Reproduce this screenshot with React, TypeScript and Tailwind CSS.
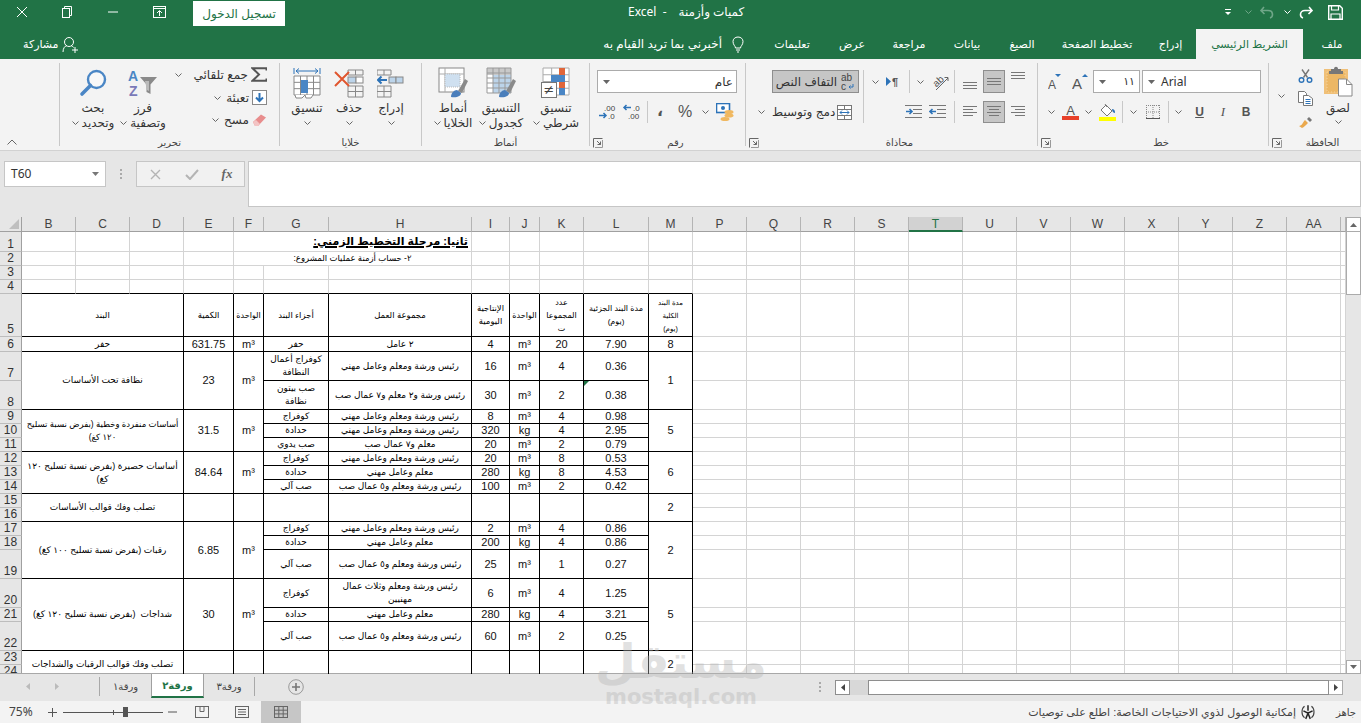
import React from "react";

const Chev = ({ c = "#666" }: { c?: string }) => (
  <svg width="7" height="4" viewBox="0 0 7 4" className="shrink-0"><path d="M.5.5 3.5 3.5 6.5.5" fill="none" stroke={c} /></svg>
);
const ChevBox = ({ w }: { w: string }) => <div className={w + " flex justify-center items-center"}><Chev /></div>;
const Div = ({ cls = "" }: { cls?: string }) => <div className={"w-px self-stretch bg-[#c8c8c8] " + cls} />;

const Launcher = () => (
  <svg width="10" height="10" viewBox="0 0 10 10"><path d="M.5 9.5V.5h9M4 3l3.5 3.5M7.5 3.5v3h-3" fill="none" stroke="#666" /><path d="M2 9.5h7.5V2" fill="none" stroke="#999" /></svg>
);

const Group = ({ w, label, launcher, children }: { w: string; label: string; launcher?: boolean; children: React.ReactNode }) => (
  <div className={w + " h-full flex flex-col shrink-0"}>
    <div className="flex-1 min-h-0">{children}</div>
    {launcher ? (
      <div className="h-[15px] grid grid-cols-[16px_1fr] items-center text-[10px] text-[#444]">
        <div className="pl-[3px] flex"><Launcher /></div>
        <div className="text-center leading-[15px]">{label}</div>
      </div>
    ) : (
      <div className="h-[15px] text-center text-[10px] leading-[15px] text-[#444]">{label}</div>
    )}
  </div>
);

const Big = ({ w, icon, l1, l2, chev = true }: { w: string; icon: React.ReactNode; l1: string; l2?: string; chev?: boolean }) => (
  <div className={w + " shrink-0 flex flex-col items-center text-[12px] text-[#333] leading-[14.5px]"}>
    <div className="h-[36px] mt-[6px] flex items-center justify-center">{icon}</div>
    <div className="whitespace-nowrap">{l1}</div>
    <div className="flex items-center gap-[3px] whitespace-nowrap h-[14.5px]">
      {chev && <Chev />}
      {l2 && <span>{l2}</span>}
    </div>
  </div>
);

const Lines = ({ y, xs, w = 15 }: { y: number[]; xs: [number, number][]; w?: number }) => (
  <svg width={w} height="14" viewBox={`0 0 ${w} 14`}>
    {y.map((v, i) => <path key={i} d={`M${xs[i][0]} ${v + 0.5}H${xs[i][1]}`} stroke="#777" />)}
  </svg>
);
const AL = { y: [1, 4, 7, 10], xs: [[0, 14], [0, 10], [0, 14], [0, 10]] as [number, number][] };
const AC = { y: [1, 4, 7, 10], xs: [[0, 14], [2, 12], [0, 14], [2, 12]] as [number, number][] };
const AR = { y: [1, 4, 7, 10], xs: [[0, 14], [4, 14], [0, 14], [4, 14]] as [number, number][] };
const XS3 = [[0, 14], [0, 14], [0, 14]] as [number, number][];

const Grid3 = ({ x, y, w, h, nx, ny, stroke = "#888" }: { x: number; y: number; w: number; h: number; nx: number; ny: number; stroke?: string }) => {
  const p: string[] = [];
  for (let i = 0; i <= nx; i++) p.push(`M${x + (i * w) / nx} ${y}V${y + h}`);
  for (let i = 0; i <= ny; i++) p.push(`M${x} ${y + (i * h) / ny}H${x + w}`);
  return <path d={p.join("")} stroke={stroke} fill="none" strokeWidth="1" />;
};

const Brush = () => (
  <g>
    <path d="M20 24 27 12l3 2-6 12z" fill="#8a8a8a" />
    <path d="M13 30c0-4 3-7 6-7l4 3c0 3-4 5-10 4z" fill="#4a7ebb" />
  </g>
);

const IconSearch = () => (
  <svg width="28" height="28" viewBox="0 0 28 28"><circle cx="17.5" cy="10.5" r="8.5" fill="#fff" fillOpacity=".4" stroke="#4a86c5" strokeWidth="2.4" /><path d="M11.5 16.5 3 25" stroke="#4a86c5" strokeWidth="3.6" strokeLinecap="round" /></svg>
);
const IconSort = () => (
  <svg width="30" height="28" viewBox="0 0 30 28"><text x="0" y="12" fontSize="14" fontWeight="700" fill="#4a86c5" fontFamily="Liberation Sans">A</text><text x="1" y="27" fontSize="14" fontWeight="700" fill="#7a7ab8" fontFamily="Liberation Sans">Z</text><path d="M12 8h17l-6.5 7.5V25l-4-2v-7.5z" fill="#8a8a8a" /><path d="M17 12h4v10l-2-1z" fill="#bbb" /></svg>
);
const IconSigma = () => (
  <svg width="16" height="15" viewBox="0 0 16 15"><path d="M15.5 3.5V1.2H1.5L8 7.5l-6.5 6.3h14v-2.3" fill="none" stroke="#555" strokeWidth="2" /></svg>
);
const IconFill = () => (
  <svg width="15" height="15" viewBox="0 0 15 15"><rect x=".5" y=".5" width="14" height="14" fill="#fff" stroke="#888" /><path d="M7.5 3v8M4 7.5l3.5 3.5L11 7.5" fill="none" stroke="#2d73b8" strokeWidth="2" /></svg>
);
const IconEraser = () => (
  <svg width="15" height="14" viewBox="0 0 15 14"><path d="M1 9 9 1.5l5 3L6 13H3z" fill="#e88d8d" /><path d="M1 9l2 4h3l2-2-4-4z" fill="#f3c4c4" /></svg>
);
const IconFormat = () => (
  <svg width="28" height="32" viewBox="0 0 28 32">
    <path d="M1 1v6M27 1v6M3 4h22M3 4l3-2.5M3 4l3 2.5M25 4l-3-2.5M25 4l-3 2.5" stroke="#2d73b8" fill="none" />
    <rect x="1" y="9" width="26" height="19" fill="#fff" />
    <Grid3 x={1} y={9} w={26} h={19} nx={4} ny={3} />
    <rect x="8" y="13" width="7" height="13" fill="#4a86c5" />
    <path d="M2 28l1 3h6l3-3M12 28l1 3h5l2-3" fill="#fff" stroke="#888" />
  </svg>
);
const IconDelete = () => (
  <svg width="30" height="29" viewBox="0 0 30 29">
    <Grid3 x={14} y={1} w={15} h={5} nx={2} ny={1} />
    <rect x="14" y="8" width="8" height="6" fill="#bcd4ea" stroke="#888" />
    <rect x="22" y="8" width="7" height="6" fill="#fff" stroke="#888" />
    <Grid3 x={14} y={17} w={15} h={11} nx={2} ny={2} />
    <path d="M1 3l14 14M15 3 1 17" stroke="#e0562f" strokeWidth="2" />
  </svg>
);
const IconInsert = () => (
  <svg width="28" height="29" viewBox="0 0 28 29">
    <Grid3 x={0} y={1} w={14} h={5} nx={2} ny={1} />
    <path d="M1 11h9M4.5 7.5 1 11l3.5 3.5" fill="none" stroke="#2d73b8" strokeWidth="2" />
    <rect x="12" y="8" width="7" height="6" fill="#bcd4ea" stroke="#888" />
    <rect x="19" y="8" width="7" height="6" fill="#bcd4ea" stroke="#888" />
    <Grid3 x={0} y={17} w={14} h={11} nx={2} ny={2} />
  </svg>
);
const IconCond = () => (
  <svg width="30" height="32" viewBox="0 0 30 32">
    <rect x="2" y="1" width="26" height="27" fill="#fff" />
    <Grid3 x={2} y={1} w={26} h={27} nx={3} ny={4} stroke="#aaa" />
    <rect x="18" y="1" width="6" height="7" fill="#e0663a" />
    <rect x="10" y="8" width="14" height="7" fill="#4a86c5" />
    <rect x="18" y="15" width="6" height="6" fill="#e0663a" />
    <rect x="18" y="21" width="6" height="7" fill="#4a86c5" />
    <rect x=".5" y="15.5" width="15" height="15" fill="#fff" stroke="#777" />
    <text x="8" y="27" textAnchor="middle" fontSize="13" fill="#444" fontFamily="DejaVu Sans">≠</text>
  </svg>
);
const IconTable = () => (
  <svg width="31" height="32" viewBox="0 0 31 32">
    <rect x="1" y="1" width="24" height="25" fill="#fff" />
    <rect x="1" y="1" width="24" height="7" fill="#c9c9c9" />
    <rect x="7" y="8" width="18" height="18" fill="#bcd4ea" />
    <Grid3 x={1} y={1} w={24} h={25} nx={4} ny={5} stroke="#999" />
    <Brush />
  </svg>
);
const IconStyles = () => (
  <svg width="31" height="32" viewBox="0 0 31 32">
    <rect x="1" y="1" width="25" height="24" fill="#fff" stroke="#888" />
    <path d="M1 7h25M7 1v24" stroke="#aaa" />
    <rect x="7" y="7" width="15" height="13" fill="#cfe0f0" stroke="#bbb" strokeDasharray="1 1" />
    <Brush />
  </svg>
);
const IconWrap = () => (
  <svg width="14" height="18" viewBox="0 0 14 18"><text x="0" y="8" fontSize="10" fill="#444" fontFamily="Liberation Sans">ab</text><text x="0" y="17" fontSize="10" fill="#444" fontFamily="Liberation Sans">c</text><path d="M12 11v3H8M9.500 12.500 8 14l1.500 1.500" fill="none" stroke="#2d73b8" /></svg>
);
const IconMerge = () => (
  <svg width="15" height="15" viewBox="0 0 15 15"><rect x=".5" y=".5" width="14" height="14" fill="#fff" stroke="#777" /><path d="M0 4.500h15M0 10.500h15M7.500 0v4M7.500 11v4" stroke="#777" /><path d="M3 7.500h9M5 5.500l-2 2 2 2M10 5.500l2 2-2 2" fill="none" stroke="#2d73b8" /></svg>
);
const IconOrient = () => (
  <svg width="17" height="18" viewBox="0 0 17 18">
    <text x="1" y="12" fontSize="10" fill="#555" fontFamily="Liberation Sans" transform="rotate(-42 6 9)">ab</text>
    <path d="M4 17 16 5M12.500 4.500H16v3.500" fill="none" stroke="#666" />
  </svg>
);
const IconPara = () => (
  <svg width="14" height="11" viewBox="0 0 14 11"><path d="M0 1l5 4.500L0 10z" fill="#2d73b8" /><text x="6" y="10" fontSize="11" fontWeight="700" fill="#555" fontFamily="Liberation Sans">¶</text></svg>
);
const IconIndent = ({ dec }: { dec?: boolean }) => (
  <svg width="17" height="14" viewBox="0 0 17 14">
    <path d="M0 .5h17M8 4.500h9M8 8.500h9M0 12.500h17" stroke="#777" />
    <path d={dec ? "M7 6.500H1M3.500 4 1 6.500 3.500 9" : "M1 6.500h6M4.500 4 7 6.500 4.500 9"} fill="none" stroke="#2d73b8" strokeWidth="1.6" />
  </svg>
);
const IconCurrency = () => (
  <svg width="18" height="19" viewBox="0 0 18 19">
    <rect x=".5" y=".5" width="13" height="9" fill="#fff" stroke="#2d73b8" strokeWidth="1.6" />
    <circle cx="7" cy="5" r="2" fill="#2d73b8" />
    <ellipse cx="13" cy="9" rx="4.500" ry="2" fill="#f0b860" />
    <ellipse cx="13" cy="12.500" rx="4.500" ry="2" fill="#f0b860" />
    <ellipse cx="9" cy="16" rx="4.500" ry="2" fill="#f0b860" />
  </svg>
);
const IconDec = ({ inc }: { inc?: boolean }) => (
  <svg width="20" height="16" viewBox="0 0 20 16" fontFamily="Liberation Sans" fontSize="8" fill="#444">
    {inc ? (
      <>
        <text x="6" y="7">.00</text>
        <text x="10" y="15">.0</text>
        <path d="M1 11.500h7M5.500 9 8 11.500 5.500 14" fill="none" stroke="#2d73b8" strokeWidth="1.5" />
      </>
    ) : (
      <>
        <text x="11" y="7">.0</text>
        <text x="6" y="15">.00</text>
        <path d="M9 3.500H2M4.500 1 2 3.500 4.500 6" fill="none" stroke="#2d73b8" strokeWidth="1.5" />
      </>
    )}
  </svg>
);
const IconAUp = ({ big }: { big?: boolean }) => (
  <svg width="17" height="17" viewBox="0 0 17 17">
    <text x="0" y="16" fontSize={big ? 15 : 12} fill="#555" fontFamily="Liberation Sans">A</text>
    {big ? <path d="M10 4l3-3 3 3z" fill="#2d73b8" /> : <path d="M7 1h6l-3 3z" fill="#2d73b8" />}
  </svg>
);
const IconFontColor = () => (
  <svg width="17" height="16" viewBox="0 0 17 16">
    <text x="8.5" y="11" textAnchor="middle" fontSize="13" fill="#555" fontFamily="Liberation Sans">A</text>
    <rect y="12" width="17" height="4" fill="#e8412a" />
  </svg>
);
const IconFillColor = () => (
  <svg width="17" height="18" viewBox="0 0 17 18">
    <path d="M2 7l5-5 6 6-5 5z" fill="#fff" stroke="#777" />
    <path d="M6 1l2 3" stroke="#777" />
    <path d="M13 6c2 0 3 1 3 4-1.500 0-3-1.500-3-4z" fill="#2d73b8" />
    <rect y="14" width="17" height="4" fill="#ffff00" />
  </svg>
);
const IconBorder = () => (
  <svg width="14" height="14" viewBox="0 0 14 14"><path d="M.5 0v14M7 0v14M13.500 0v14M0 .5h14M0 7h14" stroke="#888" strokeDasharray="1 1" /><path d="M0 13.500h14" stroke="#555" /></svg>
);
const IconPaste = () => (
  <svg width="29" height="31" viewBox="0 0 29 31">
    <rect x="0" y="3" width="24" height="25" fill="#f0c078" />
    <rect x="3" y="6" width="18" height="20" fill="#ecb765" strokeDasharray="1 2" stroke="#f5d39c" />
    <path d="M7 5V3h3c0-3 4-3 4 0h3v2h2v3H5V5z" fill="#777" />
    <path d="M14.500 13h8l5.500 5.500V30H14.500z" fill="#fff" stroke="#888" />
    <path d="M22.500 13v5.500H28" fill="none" stroke="#888" />
  </svg>
);
const IconCut = () => (
  <svg width="15" height="15" viewBox="0 0 15 15"><path d="M4 1.500 9.500 9.500M11 1.500 5.500 9.500" stroke="#777" strokeWidth="1.400" /><circle cx="3.500" cy="12" r="2.300" fill="none" stroke="#2d73b8" strokeWidth="1.400" /><circle cx="11.500" cy="12" r="2.300" fill="none" stroke="#2d73b8" strokeWidth="1.400" /></svg>
);
const IconCopy = () => (
  <svg width="15" height="15" viewBox="0 0 15 15"><path d="M.5.5h6l2 2v9h-8z" fill="#fff" stroke="#777" /><path d="M5.500 4.500h5l4 3v7h-9z" fill="#fff" stroke="#777" /><path d="M7.500 8.500h5M7.500 10.500h5M7.500 12.500h5" stroke="#2d73b8" /></svg>
);
const IconPainter = () => (
  <svg width="15" height="15" viewBox="0 0 15 15"><path d="M9 5l2-2 3 3-2 2z" fill="#777" /><path d="M1 12c3 0 4-4 6-6l3 3c-2 2-5 5-6 5z" fill="#eaa94e" /></svg>
);

const Tab = ({ w, t, active }: { w: string; t: string; active?: boolean }) => (
  <div className={w + " h-full flex items-center justify-center text-[11px] whitespace-nowrap " + (active ? "bg-[#f3f3f3] text-[#217346]" : "text-white")}>{t}</div>
);

const TitleBar = () => (
  <div className="h-[29px] bg-[#217346] flex items-center text-white shrink-0 pb-[5px]">
    <div className="w-[44px] flex justify-center"><svg width="12" height="12" viewBox="0 0 12 12"><path d="M1 1l10 10M11 1 1 11" stroke="#fff" /></svg></div>
    <div className="w-[46px] flex justify-center"><svg width="10" height="12" viewBox="0 0 10 12"><rect x=".5" y="2.500" width="7" height="9" fill="none" stroke="#fff" /><path d="M2.500 2.500V.5h7v9h-2" fill="none" stroke="#fff" /></svg></div>
    <div className="w-[46px] flex justify-center"><svg width="10" height="2" viewBox="0 0 10 2"><path d="M0 1h10" stroke="#fff" /></svg></div>
    <div className="w-[46px] flex justify-center"><svg width="13" height="12" viewBox="0 0 13 12"><rect x=".5" y=".5" width="12" height="11" fill="none" stroke="#fff" /><path d="M0 2.500h13M6.500 10V5M4 7l2.500-2.500L9 7" fill="none" stroke="#fff" /></svg></div>
    <div className="ml-[11px] w-[92px] h-[25px] self-start mt-[1px] bg-white text-[#217346] text-[12px] flex items-center justify-center whitespace-nowrap">تسجيل الدخول</div>
    <div className="ml-[343px] flex gap-[12px] items-center text-[12px] whitespace-nowrap font-['Noto_Sans','DejaVu_Sans',sans-serif]">
      <span>Excel&nbsp;&nbsp;-</span>
      <span>كميات وأزمنة</span>
    </div>
    <div className="flex-1" />
    <div className="flex items-center">
      <div className="w-[8px] mr-[13px] flex justify-center"><svg width="8" height="8" viewBox="0 0 8 8"><path d="M1 1.500h6" stroke="#fff" /><path d="M1 4h6L4 7z" fill="#fff" /></svg></div>
      <div className="w-[7px] mr-[8px] flex justify-center"><Chev c="#6fa688" /></div>
      <div className="w-[14px] mr-[10px]"><svg width="14" height="13" viewBox="0 0 14 13"><path d="M4 1 1 4.500 4.500 8M1.500 4.500H8c3 0 4.500 2 4.500 4 0 1.500-1 3-2.500 3.500" fill="none" stroke="#6fa688" strokeWidth="1.6" /></svg></div>
      <div className="w-[7px] mr-[8px] flex justify-center"><Chev c="#fff" /></div>
      <div className="w-[14px] mr-[15px]"><svg width="14" height="13" viewBox="0 0 14 13"><path d="M10 1l3 3.500L9.500 8M12.500 4.500H6c-3 0-4.500 2-4.500 4 0 1.500 1 3 2.500 3.500" fill="none" stroke="#fff" strokeWidth="1.6" /></svg></div>
      <div className="w-[16px] mr-[17px]"><svg width="15" height="15" viewBox="0 0 15 15"><path d="M.7.7h11l2.600 2.600v11H.7z" fill="none" stroke="#fff" strokeWidth="1.400" /><path d="M3.500.7v4.300h7V.7M3 14V9h9v5" fill="none" stroke="#fff" strokeWidth="1.200" /></svg></div>
    </div>
  </div>
);

const TabRow = () => (
  <div className="h-[30px] bg-[#217346] flex items-center text-white shrink-0">
    <div className="ml-[23px] flex items-center gap-[3px] text-[11px] whitespace-nowrap">
      <span>مشاركة</span>
      <svg width="17" height="17" viewBox="0 0 17 17"><circle cx="7" cy="6" r="4.500" fill="none" stroke="#fff" /><path d="M1 16c0-4 2-6 4-6.500M9 9.500c1 .3 2 1 2.500 2" fill="none" stroke="#fff" /><path d="M13 11v6M10 14h6" stroke="#fff" /></svg>
    </div>
    <div className="flex-1" />
    <div className="h-full flex items-center">
      <span className="text-[12px] whitespace-nowrap mr-[10px]">أخبرني بما تريد القيام به</span>
      <svg width="12" height="17" viewBox="0 0 12 17" className="mr-[15px]"><path d="M3.500 12c0-2-2.500-3-2.500-6.500C1 3 3 1 6 1s5 2 5 4.500C11 9 8.500 10 8.500 12zM4 14h4M5 16h2" fill="none" stroke="#fff" /></svg>
      <Tab w="w-[66px]" t="تعليمات" />
      <Tab w="w-[54px]" t="عرض" />
      <Tab w="w-[60px]" t="مراجعة" />
      <Tab w="w-[56px]" t="بيانات" />
      <Tab w="w-[54px]" t="الصيغ" />
      <Tab w="w-[96px]" t="تخطيط الصفحة" />
      <Tab w="w-[51px]" t="إدراج" />
      <Tab w="w-[107px]" t="الشريط الرئيسي" active />
      <Tab w="w-[58px]" t="ملف" />
    </div>
  </div>
);

const Ribbon = () => (
  <div className="h-[92px] bg-[#f3f3f3] border-b border-[#d2d2d2] flex shrink-0 text-[#333] pt-[4px]">
    <div className="w-[59px] flex flex-col justify-end pb-[5px] pl-[7px]">
      <svg width="10" height="6" viewBox="0 0 10 6"><path d="M.5 5.500 5 1l4.500 4.500" fill="none" stroke="#666" /></svg>
    </div>
    <Div cls="mb-[4px]" />
    <Group w="w-[219px]" label="تحرير">
      <div className="flex pl-[8px] -mt-[4px]">
        <Big w="w-[50px]" icon={<IconSearch />} l1="بحث" l2="وتحديد" />
        <Big w="w-[50px]" icon={<IconSort />} l1="فرز" l2="وتصفية" />
        <div className="flex-1 flex flex-col pt-[4px] pr-[12px] text-[12px]">
          <div className="h-[23px] flex items-center justify-end gap-[3px] whitespace-nowrap"><Chev /><span className="ml-[9px]">جمع تلقائي</span><IconSigma /></div>
          <div className="h-[23px] flex items-center justify-end gap-[3px] whitespace-nowrap"><Chev /><span className="ml-[2px]">تعبئة</span><IconFill /></div>
          <div className="h-[22px] flex items-center justify-end gap-[3px] whitespace-nowrap"><Chev /><span className="ml-[2px]">مسح</span><IconEraser /></div>
        </div>
      </div>
    </Group>
    <Div cls="mb-[4px]" />
    <Group w="w-[141px]" label="خلايا">
      <div className="flex pl-[6px] -mt-[4px]">
        <Big w="w-[42px]" icon={<IconFormat />} l1="تنسيق" />
        <Big w="w-[42px]" icon={<IconDelete />} l1="حذف" />
        <Big w="w-[42px]" icon={<IconInsert />} l1="إدراج" />
      </div>
    </Group>
    <Div cls="mb-[4px]" />
    <Group w="w-[167px]" label="أنماط">
      <div className="flex pl-[4px] -mt-[4px]">
        <Big w="w-[54px]" icon={<IconStyles />} l1="أنماط" l2="الخلايا" />
        <Big w="w-[42px]" icon={<IconTable />} l1="التنسيق" l2="كجدول" />
        <Big w="w-[68px]" icon={<IconCond />} l1="تنسيق" l2="شرطي" />
      </div>
    </Group>
    <Div cls="mb-[4px]" />
    <Group w="w-[155px]" label="رقم" launcher>
      <div className="pl-[7px] pt-[7px]">
        <div className="w-[140px] h-[23px] bg-white border border-[#ababab] flex items-center justify-between pl-[5px] pr-[3px] text-[12px]">
          <svg width="7" height="4" viewBox="0 0 7 4"><path d="M0 0h7L3.500 4z" fill="#666" /></svg>
          <span>عام</span>
        </div>
      </div>
      <div className="flex items-center h-[22px] mt-[8px] pl-[6px] text-[#555]">
        <div className="w-[24px] flex justify-center"><IconDec inc /></div>
        <div className="w-[24px] flex justify-center"><IconDec /></div>
        <Div cls="ml-[3px]" />
        <div className="w-[24px] flex justify-center text-[16px] font-bold leading-none pb-[3px]">،</div>
        <div className="w-[26px] flex justify-center text-[16px] leading-none">%</div>
        <ChevBox w="w-[14px]" />
        <div className="w-[26px] flex justify-center"><IconCurrency /></div>
      </div>
    </Group>
    <Div cls="mb-[4px]" />
    <Group w="w-[291px]" label="محاذاة" launcher>
      <div className="flex pt-[7px] h-[60px]">
        <div className="w-[117px] shrink-0">
          <div className="ml-[26px] w-[87px] h-[23px] bg-[#c6c6c6] border border-[#8e8e8e] flex items-center justify-center gap-[4px] text-[12px] whitespace-nowrap">
            <span>التفاف النص</span>
            <IconWrap />
          </div>
          <div className="mt-[8px] h-[22px] flex items-center pl-[12px] text-[12px] whitespace-nowrap">
            <Chev />
            <span className="ml-[7px] w-[62px] text-center">دمج وتوسيط</span>
            <span className="ml-[3px] flex"><IconMerge /></span>
          </div>
        </div>
        <Div cls="self-auto h-[53px]" />
        <div className="flex flex-col flex-1">
          <div className="h-[23px] flex items-center">
            <ChevBox w="w-[22px]" />
            <div className="w-[14px]"><IconPara /></div>
            <Div cls="ml-[9px]" />
            <ChevBox w="w-[21px]" />
            <div className="w-[16px] mx-[1px]"><IconOrient /></div>
            <Div cls="ml-[5px]" />
            <div className="w-[22px] ml-[4px] self-end flex justify-center"><Lines y={[3, 6, 9]} xs={XS3} /></div>
            <div className="w-[22px] h-[23px] ml-[2px] bg-[#c6c6c6] border border-[#8e8e8e] flex items-center justify-center"><Lines y={[3, 6, 9]} xs={XS3} /></div>
            <div className="w-[22px] ml-[2px] self-start pt-[2px] flex justify-center"><Lines y={[0, 3, 6]} xs={XS3} /></div>
          </div>
          <div className="h-[22px] mt-[8px] flex items-center">
            <div className="w-[41px]" />
            <div className="w-[20px]"><IconIndent /></div>
            <div className="w-[4px]" />
            <div className="w-[20px]"><IconIndent dec /></div>
            <div className="w-[5px]" />
            <Div />
            <div className="w-[22px] ml-[4px] flex justify-center"><Lines {...AL} /></div>
            <div className="w-[22px] h-[22px] ml-[2px] bg-[#c6c6c6] border border-[#8e8e8e] flex items-center justify-center"><Lines {...AC} /></div>
            <div className="w-[22px] ml-[2px] flex justify-center"><Lines {...AR} /></div>
          </div>
        </div>
      </div>
    </Group>
    <Div cls="mb-[4px]" />
    <Group w="w-[230px]" label="خط" launcher>
      <div className="pt-[7px] pl-[8px] flex items-center">
        <div className="w-[21px] flex justify-center"><IconAUp /></div>
        <div className="w-[26px] flex justify-center"><IconAUp big /></div>
        <div className="w-[47px] h-[23px] bg-white border border-[#ababab] flex items-center justify-between pl-[5px] pr-[4px] text-[11px]">
          <svg width="7" height="4" viewBox="0 0 7 4"><path d="M0 0h7L3.500 4z" fill="#666" /></svg>
          <span>١١</span>
        </div>
        <div className="w-[119px] ml-[2px] h-[23px] bg-white border border-[#ababab] flex items-center gap-[6px] pl-[5px] text-[12px] font-['Noto_Sans',sans-serif]">
          <svg width="7" height="4" viewBox="0 0 7 4"><path d="M0 0h7L3.500 4z" fill="#666" /></svg>
          <span>Arial</span>
        </div>
      </div>
      <div className="h-[22px] mt-[8px] pl-[6px] flex items-center text-[#555]">
        <ChevBox w="w-[15px]" />
        <div className="w-[21px] ml-[1px] flex justify-center"><IconFontColor /></div>
        <ChevBox w="w-[15px]" />
        <div className="w-[21px] ml-[1px] flex justify-center"><IconFillColor /></div>
        <Div cls="ml-[4px]" />
        <ChevBox w="w-[20px]" />
        <div className="w-[20px] flex justify-center"><IconBorder /></div>
        <Div cls="ml-[5px]" />
        <ChevBox w="w-[19px]" />
        <div className="w-[23px] flex justify-center text-[12px] font-bold underline">U</div>
        <div className="w-[24px] flex justify-center text-[13px] italic font-['Liberation_Serif',serif]">I</div>
        <div className="w-[22px] flex justify-center text-[12px] font-bold">B</div>
      </div>
    </Group>
    <Div cls="mb-[4px]" />
    <Group w="w-[91px]" label="الحافظة" launcher>
      <div className="flex pl-[9px] h-full">
        <div className="w-[16px] flex items-center h-[66px]"><Chev /></div>
        <div className="w-[20px] ml-[1px] pt-[5px] flex flex-col items-center gap-[8px]">
          <IconCut />
          <IconCopy />
          <IconPainter />
        </div>
        <div className="w-[34px] ml-[6px] flex flex-col items-center text-[12px]">
          <div className="pt-[3px] h-[37px]"><IconPaste /></div>
          <div className="leading-[14px] mt-[1px]">لصق</div>
          <div className="mt-[5px]"><Chev /></div>
        </div>
      </div>
    </Group>
  </div>
);

const FormulaBar = () => (
  <div className="h-[66px] bg-[#e6e6e6] flex pt-[10px] shrink-0">
    <div className="ml-[4px] w-[102px] h-[26px] bg-white border border-[#c6c6c6] flex items-center justify-between pl-[6px] pr-[6px] text-[12px] text-[#333] font-['Noto_Sans',sans-serif]">
      <span>T60</span>
      <svg width="7" height="4" viewBox="0 0 7 4"><path d="M0 0h7L3.500 4z" fill="#777" /></svg>
    </div>
    <div className="w-[30px] h-[26px] flex flex-col items-center justify-center gap-[2px]">
      <div className="w-[2px] h-[2px] bg-[#aaa]" /><div className="w-[2px] h-[2px] bg-[#aaa]" /><div className="w-[2px] h-[2px] bg-[#aaa]" />
    </div>
    <div className="w-[109px] h-[26px] bg-[#f1f1f1] border border-[#c6c6c6] flex items-center text-[#aaa]">
      <div className="w-[36px] flex justify-center"><svg width="11" height="11" viewBox="0 0 11 11"><path d="M1 1l9 9M10 1l-9 9" stroke="#b4b4b4" strokeWidth="1.400" /></svg></div>
      <div className="w-[37px] flex justify-center"><svg width="14" height="11" viewBox="0 0 14 11"><path d="M1 6l4 4 8-9" fill="none" stroke="#b4b4b4" strokeWidth="2" /></svg></div>
      <div className="w-[34px] text-center text-[13px] italic font-bold text-[#666] font-['Liberation_Serif',serif]">fx</div>
    </div>
    <div className="ml-[3px] flex-1 h-[46px] bg-white border border-[#c6c6c6]" />
  </div>
);

type Cell = { t?: string; c?: 3; r?: 2 | 3; num?: boolean; flag?: boolean; sz?: string };
const txt = (t: string, sz?: string): Cell => ({ t, sz });
const n = (t: string): Cell => ({ t, num: true });
const W1 = "رئيس ورشة ومعلم وعامل مهني";
const W2 = "معلم وعامل مهني";
const W3 = "رئيس ورشة ومعلم و٥ عمال صب";
const K = "كوفراج";
const H = "حدادة";
const PM = "صب آلي";
const span2 = (t: string, num = false): Cell => ({ t, r: 2, num });
const span3 = (t: string, num = false): Cell => ({ t, r: 3, num });
const HD = "text-[8.5px]";

const tableRows: [number, Cell[]][] = [
  [5, [{ t: "البند", c: 3, sz: HD }, txt("الكمية", HD), txt("الواحدة", "text-[8px]"), txt("أجزاء البند", HD), txt("مجموعة العمل", HD), txt("الإنتاجية\nاليومية", HD), txt("الواحدة", "text-[8px]"), txt("عدد\nالمجموعا\nت", "text-[8px]"), txt("مدة البند الجزئية\n(يوم)", "text-[8px]"), txt("مدة البند\nالكلية\n(يوم)", "text-[7px]")]],
  [6, [{ t: "حفر", c: 3 }, n("631.75"), n("m³"), txt("حفر"), txt("٢ عامل"), n("4"), n("m³"), n("20"), n("7.90"), n("8")]],
  [7, [{ t: "نظافة تحت الأساسات", c: 3, r: 2 }, span2("23", true), span2("m³", true), txt("كوفراج أعمال\nالنظافة"), txt(W1), n("16"), n("m³"), n("4"), n("0.36"), span2("1", true)]],
  [8, [txt("صب بيتون\nنظافة"), txt("رئيس ورشة و٢ معلم و٧ عمال صب"), n("30"), n("m³"), n("2"), { t: "0.38", num: true, flag: true }]],
  [9, [{ t: "أساسات منفردة وخطية (بفرض نسبة تسليح\n١٢٠ كغ)", c: 3, r: 3, sz: HD }, span3("31.5", true), span3("m³", true), txt(K), txt(W1), n("8"), n("m³"), n("4"), n("0.98"), span3("5", true)]],
  [10, [txt(H), txt(W1), n("320"), n("kg"), n("4"), n("2.95")]],
  [11, [txt("صب يدوي"), txt("معلم و٧ عمال صب"), n("20"), n("m³"), n("2"), n("0.79")]],
  [12, [{ t: "أساسات حصيرة (بفرض نسبة تسليح ١٢٠\nكغ)", c: 3, r: 3 }, span3("84.64", true), span3("m³", true), txt(K), txt(W1), n("20"), n("m³"), n("8"), n("0.53"), span3("6", true)]],
  [13, [txt(H), txt(W2), n("280"), n("kg"), n("8"), n("4.53")]],
  [14, [txt(PM), txt(W3), n("100"), n("m³"), n("2"), n("0.42")]],
  [15, [{ t: "تصلب وفك قوالب الأساسات", c: 3, r: 2 }, span2(""), span2(""), span2(""), span2(""), span2(""), span2(""), span2(""), span2(""), span2("2", true)]],
  [16, []],
  [17, [{ t: "رقبات (بفرض نسبة تسليح ١٠٠ كغ)", c: 3, r: 3 }, span3("6.85", true), span3("m³", true), txt(K), txt(W1), n("2"), n("m³"), n("4"), n("0.86"), span3("2", true)]],
  [18, [txt(H), txt(W2), n("200"), n("kg"), n("4"), n("0.86")]],
  [19, [txt(PM), txt(W3), n("25"), n("m³"), n("1"), n("0.27")]],
  [20, [{ t: "شداجات  (بفرض نسبة تسليح ١٢٠ كغ)", c: 3, r: 3 }, span3("30", true), span3("m³", true), txt(K), txt("رئيس ورشة ومعلم وثلاث عمال\nمهنيين"), n("6"), n("m³"), n("4"), n("1.25"), span3("5", true)]],
  [21, [txt(H), txt(W2), n("280"), n("kg"), n("4"), n("3.21")]],
  [22, [txt(PM), txt(W3), n("60"), n("m³"), n("2"), n("0.25")]],
  [23, [{ t: "تصلب وفك قوالب الرقبات والشداجات", c: 3, r: 2 }, span2(""), span2(""), span2(""), span2(""), span2(""), span2(""), span2(""), span2(""), span2("2", true)]],
  [24, []],
];

const RowNum = ({ n }: { n: number }) => (
  <div className="bg-[#e6e6e6] border-r border-r-[#a0a0a0] border-b border-b-[#bdbdbd] flex items-end justify-center text-[12px] leading-[13px] text-[#333] overflow-hidden">{n}</div>
);
const Blank = ({ cls = "" }: { cls?: string }) => <div className={"border-r border-b border-[#d4d4d4] " + cls} />;
const Right = () => (
  <>
    {Array.from({ length: 13 }, (_, i) => <Blank key={i} />)}
  </>
);
const blackBase = "border-r border-b border-black overflow-hidden flex items-center justify-center whitespace-pre text-center relative ";
const BCell = ({ c }: { c: Cell }) => (
  <div dir={c.num ? "ltr" : "rtl"} className={blackBase + (c.c === 3 ? "col-span-3 " : "") + (c.r === 2 ? "row-span-2 " : c.r === 3 ? "row-span-3 " : "") + (c.num ? "text-[11px] text-[#111]" : (c.sz ?? "text-[9px]") + " leading-[13px] text-black")}>
    {c.flag && <span className="absolute left-0 top-0 w-0 h-0 border-t-[5px] border-r-[5px] border-t-[#217346] border-r-transparent" />}
    {c.t}
  </div>
);

const COLS = ["B", "C", "D", "E", "F", "G", "H", "I", "J", "K", "L", "M", "P", "Q", "R", "S", "T", "U", "V", "W", "X", "Y", "Z", "AA", ""];

const Sheet = () => (
  <div className="flex-1 h-full overflow-hidden bg-white grid content-start grid-cols-[22px_54px_54px_54px_50px_30px_65px_143px_38px_30px_44px_65px_44px_54px_54px_54px_54px_54px_54px_54px_54px_54px_54px_54px_54px_5px] grid-rows-[15px_20px_14px_14px_14px_43px_15px_29px_29px_14px_14px_14px_14px_14px_14px_14px_14px_14px_14px_29px_29px_14px_29px_14px_14px]">
    <div className="bg-[#e6e6e6] border-r border-b border-[#a0a0a0] flex items-end justify-end p-[2px]">
      <div className="w-0 h-0 border-b-[10px] border-l-[10px] border-b-[#bfbfbf] border-l-transparent" />
    </div>
    {COLS.map((h) => (
      <div key={h} className={"border-r border-r-[#b4b4b4] flex items-center justify-center text-[12px] " + (h === "T" ? "bg-[#d2d2d2] text-[#217346] border-b-2 border-b-[#217346]" : "bg-[#e6e6e6] text-[#444] border-b border-b-[#a0a0a0]")}>{h}</div>
    ))}
    <RowNum n={1} />
    <Blank /><Blank /><Blank /><Blank />
    <div className="col-span-3 border-r border-b border-[#d4d4d4] overflow-visible whitespace-nowrap flex items-end justify-end text-[11px] leading-[18px] font-bold underline decoration-2 text-black pr-[3px] pb-[1px]" dir="ltr">
      <span dir="rtl">ثانيا: مرحلة التخطيط الزمني:</span>
    </div>
    <Blank /><Blank /><Blank /><Blank /><Blank />
    <Right />
    <RowNum n={2} />
    <Blank /><Blank /><Blank /><Blank />
    <div className="col-span-3 border-r border-b border-[#d4d4d4] whitespace-nowrap flex items-center justify-center text-[8.5px] text-black" dir="rtl">٢- حساب أزمنة عمليات المشروع:</div>
    <Blank /><Blank /><Blank /><Blank /><Blank />
    <Right />
    <RowNum n={3} />
    {Array.from({ length: 12 }, (_, i) => <Blank key={i} />)}
    <Right />
    <RowNum n={4} />
    {Array.from({ length: 12 }, (_, i) => <Blank key={i} cls="border-b-black" />)}
    <Right />
    {tableRows.map(([num, cells]) => (
      <React.Fragment key={num}>
        <RowNum n={num} />
        {cells.map((c, i) => <BCell key={i} c={c} />)}
        <Right />
      </React.Fragment>
    ))}
  </div>
);

const Tri = ({ dir, c = "#666" }: { dir: "u" | "d" | "l" | "r"; c?: string }) => {
  const d = { u: "M0 4h7L3.500 0z", d: "M0 0h7L3.500 4z", l: "M4 0v7L0 3.500z", r: "M0 0v7l4-3.500z" }[dir];
  const hor = dir === "u" || dir === "d";
  return <svg width={hor ? 7 : 4} height={hor ? 4 : 7} viewBox={hor ? "0 0 7 4" : "0 0 4 7"}><path d={d} fill={c} /></svg>;
};

const VScroll = () => (
  <div className="w-[15px] h-full bg-[#e6e6e6] flex flex-col shrink-0">
    <div className="h-[15px] bg-white border border-[#ababab] flex items-center justify-center"><Tri dir="u" /></div>
    <div className="h-[63px] bg-white border border-[#ababab] border-t-0" />
    <div className="flex-1" />
    <div className="h-[14px] bg-white border border-[#ababab] flex items-center justify-center"><Tri dir="d" /></div>
  </div>
);

const SheetTab = ({ t, w, active }: { t: string; w: string; active?: boolean }) => (
  <div className={w + " h-[24px] flex items-center justify-center text-[10px] " + (active ? "bg-white text-[#217346] font-bold border-x border-[#a0a0a0] border-b-2 border-b-[#217346]" : "text-[#444]")}>{t}</div>
);

const TabsBar = () => (
  <div className="h-[28px] bg-[#e6e6e6] border-t border-[#a8a8a8] flex items-start shrink-0 -mt-[1px]">
    <div className="w-[99px] h-[24px] flex items-center pl-[26px] gap-[25px]"><Tri dir="l" c="#bbb" /><Tri dir="r" c="#bbb" /></div>
    <div className="w-px h-[19px] mt-[3px] bg-[#a8a8a8]" />
    <SheetTab t="ورقة١" w="w-[51px]" />
    <SheetTab t="ورقة٢" w="w-[53px]" active />
    <SheetTab t="ورقة٣" w="w-[50px]" />
    <div className="w-px h-[19px] mt-[3px] bg-[#a8a8a8]" />
    <div className="ml-[33px] mt-[5px]">
      <svg width="16" height="16" viewBox="0 0 16 16"><circle cx="8" cy="8" r="7.300" fill="none" stroke="#999" /><path d="M8 4v8M4 8h8" stroke="#777" strokeWidth="1.600" /></svg>
    </div>
    <div className="ml-[515px] mt-[8px] flex flex-col gap-[2px]">
      <div className="w-[2px] h-[2px] bg-[#aaa]" /><div className="w-[2px] h-[2px] bg-[#aaa]" /><div className="w-[2px] h-[2px] bg-[#aaa]" />
    </div>
    <div className="ml-[14px] mt-[6px] flex h-[15px]">
      <div className="w-[15px] bg-white border border-[#8e8e8e] flex items-center justify-center"><Tri dir="l" c="#444" /></div>
      <div className="w-[18px] bg-[#d8d8d8]" />
      <div className="w-[461px] bg-white border border-[#8e8e8e]" />
      <div className="w-[14px] bg-white border border-[#ababab] border-l-0 flex items-center justify-center"><Tri dir="r" c="#444" /></div>
    </div>
  </div>
);

const StatusBar = () => (
  <div className="h-[22px] bg-[#f3f3f3] flex items-center text-[#444] shrink-0">
    <div className="ml-[9px] w-[32px] text-[12px] font-['Noto_Sans',sans-serif]">75%</div>
    <svg width="9" height="9" viewBox="0 0 9 9" className="ml-[7px]"><path d="M4.500 0v9M0 4.500h9" stroke="#555" /></svg>
    <div className="relative ml-[6px] w-[100px] h-[10px] flex items-center">
      <div className="flex-1 h-px bg-[#555] flex items-center justify-center"><div className="h-[5px] w-px bg-[#555]" /></div>
      <div className="absolute left-[60px] top-0 w-[5px] h-[10px] bg-[#555]" />
    </div>
    <svg width="9" height="2" viewBox="0 0 9 2" className="ml-[5px]"><path d="M0 1h9" stroke="#555" /></svg>
    <svg width="14" height="12" viewBox="0 0 14 12" className="ml-[18px]"><rect x=".5" y=".5" width="13" height="11" fill="none" stroke="#666" /><path d="M5 .5v5h4V.5" fill="none" stroke="#666" /></svg>
    <svg width="14" height="12" viewBox="0 0 14 12" className="ml-[26px]"><rect x=".5" y=".5" width="13" height="11" fill="none" stroke="#666" /><path d="M3 3.500h8M3 6h8M3 8.500h8" stroke="#666" /></svg>
    <div className="ml-[12px] w-[40px] h-full bg-[#c6c6c6] flex items-center justify-center">
      <svg width="14" height="12" viewBox="0 0 14 12"><path d="M.5 0v12M4.800 0v12M9.200 0v12M13.500 0v12M0 .5h14M0 4.200h14M0 7.900h14M0 11.500h14" stroke="#666" /></svg>
    </div>
    <div className="flex-1" />
    <span className="text-[11px] whitespace-nowrap">إمكانية الوصول لذوي الاحتياجات الخاصة: اطلع على توصيات</span>
    <svg width="18" height="16" viewBox="0 0 14 14" className="ml-[3px]"><path d="M4 2C1 4 1 10 4 12M10 2c3 2 3 8 0 10" fill="none" stroke="#444" /><path d="M7 1v5M3 6l4 2 4-2M5 13l2-5 2 5" fill="none" stroke="#222" strokeWidth="1.300" /></svg>
    <span className="ml-[19px] mr-[5px] text-[10px] whitespace-nowrap">جاهز</span>
  </div>
);

export default function App() {
  return (
    <div className="relative w-[1361px] h-[723px] overflow-hidden flex flex-col bg-white font-['Liberation_Sans','DejaVu_Sans',sans-serif]">
      <TitleBar />
      <TabRow />
      <Ribbon />
      <FormulaBar />
      <div className="h-[457px] flex shrink-0 overflow-hidden">
        <Sheet />
        <VScroll />
      </div>
      <TabsBar />
      <StatusBar />
      <div className="absolute left-[596px] top-[638px] w-[170px] pointer-events-none flex flex-col items-center text-[#b5b5b5] opacity-40">
        <div className="text-[47px] leading-[48px] font-bold whitespace-nowrap">مستقل</div>
        <div className="text-[21px] leading-[22px] font-bold whitespace-nowrap font-['DejaVu_Sans',sans-serif]">mostaql.com</div>
      </div>
    </div>
  );
}
